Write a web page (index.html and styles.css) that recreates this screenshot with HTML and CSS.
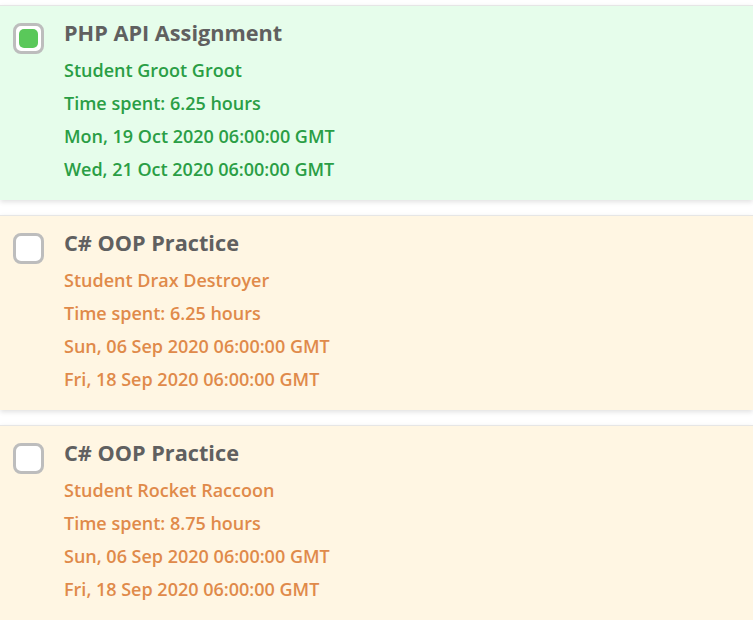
FILE: index.html
```html
<!DOCTYPE html>
<html>
<head>
<meta charset="utf-8">
<link rel="stylesheet" href="styles.css">
</head>
<body>
<div class="list">
  <div class="card done">
    <span class="check"><span class="fill"></span></span>
    <div class="info">
      <div class="title">PHP API Assignment</div>
      <div class="line">Student Groot Groot</div>
      <div class="line">Time spent: 6.25 hours</div>
      <div class="line">Mon, 19 Oct 2020 06:00:00 GMT</div>
      <div class="line">Wed, 21 Oct 2020 06:00:00 GMT</div>
    </div>
  </div>
  <div class="card pending">
    <span class="check"></span>
    <div class="info">
      <div class="title">C# OOP Practice</div>
      <div class="line">Student Drax Destroyer</div>
      <div class="line">Time spent: 6.25 hours</div>
      <div class="line">Sun, 06 Sep 2020 06:00:00 GMT</div>
      <div class="line">Fri, 18 Sep 2020 06:00:00 GMT</div>
    </div>
  </div>
  <div class="card pending">
    <span class="check"></span>
    <div class="info">
      <div class="title">C# OOP Practice</div>
      <div class="line">Student Rocket Raccoon</div>
      <div class="line">Time spent: 8.75 hours</div>
      <div class="line">Sun, 06 Sep 2020 06:00:00 GMT</div>
      <div class="line">Fri, 18 Sep 2020 06:00:00 GMT</div>
    </div>
  </div>
</div>
</body>
</html>
```
FILE: styles.css
```css
html, body {
  margin: 0;
  padding: 0;
  background: #ffffff;
  font-family: "Open Sans", "Noto Sans", sans-serif;
}
.list {
  display: flex;
  flex-direction: column;
  gap: 15px;
  padding-top: 5px;
}
.card {
  display: flex;
  align-items: flex-start;
  height: 195px;
  box-sizing: border-box;
  padding: 17px 13px 0 13px;
  border-top: 1px solid #e6e6e6;
  box-shadow: 0 2px 5px rgba(0, 0, 0, 0.12);
}
.card.done {
  background: #e6fdeb;
  color: #2a9e45;
}
.card.pending {
  background: #fff6e3;
  color: #e08a4a;
}
.check {
  flex: none;
  width: 31px;
  height: 31px;
  box-sizing: border-box;
  border: 3px solid #bdbdbd;
  border-radius: 8px;
  background: #ffffff;
  display: flex;
  align-items: center;
  justify-content: center;
}
.fill {
  width: 19px;
  height: 19px;
  border-radius: 5px;
  background: #5ac85a;
}
.info {
  margin-left: 20px;
  display: flex;
  flex-direction: column;
}
.title {
  color: #606060;
  font-weight: 700;
  font-size: 21.7px;
  line-height: 20px;
  margin-bottom: 11px;
}
.line {
  font-size: 18px;
  line-height: 33px;
  font-weight: 600;
}
```
